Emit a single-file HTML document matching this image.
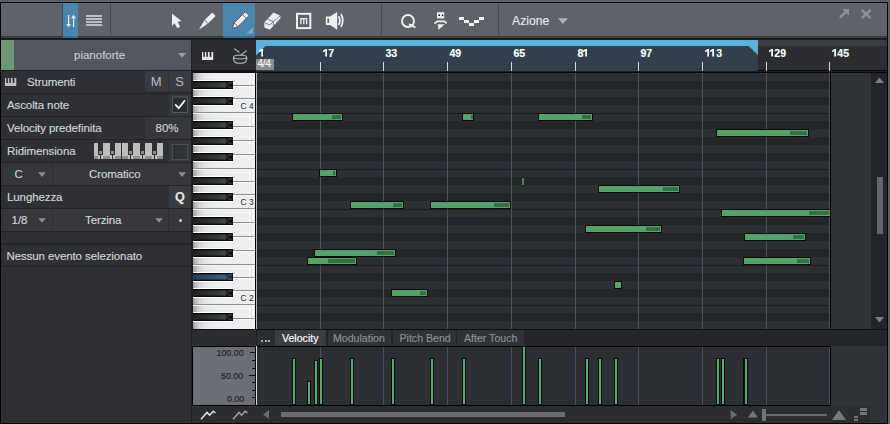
<!DOCTYPE html>
<html><head><meta charset="utf-8"><style>
html,body{margin:0;padding:0;width:890px;height:424px;overflow:hidden;background:#5b5f65}
body>div,body>span,body>svg{position:absolute;display:block}
.t{position:absolute;-webkit-text-stroke:0.15px currentColor;font-family:"Liberation Sans",sans-serif;white-space:nowrap;line-height:1}
</style></head><body>
<div style="left:0px;top:0px;width:890px;height:424px;background:#5b5f65;"></div>
<div style="left:0px;top:2px;width:888px;height:422px;background:#000;"></div>
<div style="left:1px;top:3px;width:886px;height:33px;background:#5e6269;"></div>
<div style="left:1px;top:3px;width:886px;height:1px;background:#63676e;"></div>
<div style="left:1px;top:36px;width:886px;height:2px;background:#3b3d41;"></div>
<div style="left:1px;top:38px;width:886px;height:2px;background:#1a1b1d;"></div>
<div style="left:62px;top:3px;width:1px;height:35px;background:#45484d;"></div>
<div style="left:110px;top:3px;width:1px;height:35px;background:#45484d;"></div>
<div style="left:381px;top:3px;width:1px;height:35px;background:#45484d;"></div>
<div style="left:498px;top:3px;width:1px;height:35px;background:#45484d;"></div>
<div style="left:63px;top:3px;width:15px;height:33px;background:#4a85ad;"></div>
<div style="left:63px;top:36px;width:15px;height:2px;background:#3a6a8c;"></div>
<div style="left:223px;top:3px;width:32px;height:33px;background:#4a85ad;"></div>
<div style="left:223px;top:36px;width:32px;height:2px;background:#3a6a8c;"></div>
<svg style="left:62px;top:10px" width="18" height="20" viewBox="62 10 18 20"><rect x="68" y="15" width="1.2" height="10" fill="#efefef"/><polygon points="66,24 71,24 68.6,27.2" fill="#efefef"/><rect x="73" y="17.5" width="1.2" height="9.5" fill="#efefef"/><polygon points="71,18.2 76,18.2 73.6,14.8" fill="#efefef"/></svg>
<div style="left:86px;top:15px;width:16px;height:2px;background:#bdbfc2;"></div>
<div style="left:86px;top:18px;width:16px;height:2px;background:#bdbfc2;"></div>
<div style="left:86px;top:21px;width:16px;height:2px;background:#bdbfc2;"></div>
<div style="left:86px;top:24px;width:16px;height:2px;background:#bdbfc2;"></div>
<svg style="left:168px;top:10px" width="16" height="22" viewBox="168 10 16 22"><polygon points="172,13.5 172,26 174.6,23.2 177.2,28.2 180.2,26.8 177.6,21.8 181.6,21.3" fill="#efefef"/></svg>
<svg style="left:196px;top:10px" width="22" height="22" viewBox="196 10 22 22"><g transform="translate(199,29.4) rotate(-45)"><polygon points="0,0 10.2,-2.6 10.2,2.2" fill="#efefef"/><rect x="10.9" y="-2.6" width="10.4" height="4.8" fill="#efefef"/></g></svg>
<svg style="left:226px;top:8px" width="30" height="28" viewBox="226 8 30 28"><g transform="translate(232.2,28.6) rotate(-45)"><path d="M0.3,0 L5.2,-2.7 L20.2,-2.7 Q21.2,-2.7 21.2,-1.7 L21.2,1.7 Q21.2,2.7 20.2,2.7 L5.2,2.7 Z" fill="#efefef" stroke="#4b4a4a" stroke-width="0.8"/><line x1="5.4" y1="-2.7" x2="5.4" y2="2.7" stroke="#4b4a4a" stroke-width="0.8"/><line x1="17.2" y1="-2.7" x2="17.2" y2="2.7" stroke="#4b4a4a" stroke-width="0.8"/></g><polygon points="246.3,33.5 253,27 253,33.5" fill="#7ea8c6"/></svg>
<svg style="left:260px;top:8px" width="26" height="26" viewBox="260 8 26 26"><polygon points="264.2,22.6 273.6,12.6 280.4,15.8 280.4,18.2 269.8,29.8 264.4,27.4" fill="#efefef"/><polyline points="264.6,22.8 269.8,25 273.4,21.6 280.2,15.9" fill="none" stroke="#5e6269" stroke-width="0.8"/><line x1="273.4" y1="21.6" x2="273.4" y2="25.6" stroke="#5e6269" stroke-width="0.8"/><line x1="267.5" y1="19.2" x2="273.4" y2="21.6" stroke="#5e6269" stroke-width="0.8"/></svg>
<svg style="left:294px;top:10px" width="20" height="22" viewBox="294 10 20 22"><rect x="297" y="13.8" width="13.3" height="14.3" fill="none" stroke="#efefef" stroke-width="2"/><path d="M300.9,24.2 V18.7 H306.6 V24.2 M303.8,18.7 V24.2" fill="none" stroke="#efefef" stroke-width="1.3"/></svg>
<svg style="left:322px;top:8px" width="26" height="26" viewBox="322 8 26 26"><polygon points="325.8,16.6 330.1,16.6 337.2,12 337.2,29.8 330.1,24.9 325.8,24.9" fill="#efefef"/><rect x="327.4" y="18.4" width="1.6" height="4.6" fill="#5e6269"/><path d="M338.6,16.2 Q341.2,20.6 338.6,25" fill="none" stroke="#efefef" stroke-width="1.7"/><path d="M341,14 Q344.6,20.4 341,26.8" fill="none" stroke="#efefef" stroke-width="1.7"/></svg>
<svg style="left:398px;top:10px" width="22" height="22" viewBox="398 10 22 22"><circle cx="408" cy="21" r="6" fill="none" stroke="#efefef" stroke-width="1.9"/><line x1="409" y1="24" x2="415.5" y2="27.5" stroke="#efefef" stroke-width="1.8"/></svg>
<svg style="left:430px;top:8px" width="20" height="26" viewBox="430 8 20 26"><rect x="437" y="12.2" width="7.2" height="6.2" fill="#efefef"/><circle cx="439.2" cy="15.2" r="0.9" fill="#111"/><circle cx="442.6" cy="15.4" r="0.8" fill="#111"/><polygon points="433.8,22.9 437,20.4 444.8,20.4 447.2,22.9 446,24 444.2,22.2 437.4,22.2 435.2,24.2" fill="#efefef"/><polygon points="437.8,24.2 444.8,24.2 438.6,29.8" fill="#efefef"/></svg>
<div style="left:459px;top:17px;width:5px;height:3px;background:#f2f2f2;"></div>
<div style="left:464px;top:20px;width:5px;height:3px;background:#f2f2f2;"></div>
<div style="left:469px;top:23px;width:5px;height:3px;background:#f2f2f2;"></div>
<div style="left:474px;top:20px;width:5px;height:3px;background:#f2f2f2;"></div>
<div style="left:479px;top:17px;width:5px;height:3px;background:#f2f2f2;"></div>
<span class="t" style="left:512px;top:14.97px;font-size:12.2px;color:#e4e6ea;">Azione</span>
<svg style="left:556px;top:16px" width="14" height="10" viewBox="556 16 14 10"><polygon points="558,18.2 567.8,18.2 562.9,24" fill="#afb1b5"/></svg>
<svg style="left:836px;top:6px" width="40" height="16" viewBox="836 6 40 16"><polygon points="842,9 849,9 849,15.8" fill="#8c8f94"/><line x1="840" y1="17.6" x2="846.2" y2="11.6" stroke="#8c8f94" stroke-width="2.6"/><path d="M861.6,9.8 L870.6,18.2 M870.6,9.8 L861.6,18.2" stroke="#8c8f94" stroke-width="2.4"/></svg>
<div style="left:1px;top:40px;width:13px;height:30px;background:#6f9478;"></div>
<div style="left:14px;top:40px;width:177px;height:30px;background:#54575e;"></div>
<div style="left:191px;top:40px;width:1px;height:30px;background:#1e1f22;"></div>
<div style="left:192px;top:40px;width:64px;height:30px;background:#2b2d31;"></div>
<span class="t" style="left:74px;top:50.07px;font-size:11.5px;color:#c9ced6;">pianoforte</span>
<svg style="left:176px;top:50px" width="12" height="10" viewBox="176 50 12 10"><polygon points="178.2,53 186,53 182.1,57.8" fill="#9c9fa4"/></svg>
<svg style="left:200px;top:50px" width="16" height="12" viewBox="200 50 16 12"><rect x="202" y="52" width="11.2" height="8" fill="#e6e6e6"/><rect x="203.3" y="52" width="1.6" height="4.8" fill="#2b2d31"/><rect x="206.3" y="52" width="1.6" height="4.8" fill="#2b2d31"/><rect x="209.6" y="52" width="1.8" height="4.8" fill="#2b2d31"/></svg>
<svg style="left:230px;top:46px" width="20" height="20" viewBox="230 46 20 20"><ellipse cx="240.1" cy="56.9" rx="6.5" ry="1.9" fill="none" stroke="#a6a8ac" stroke-width="1.25"/><path d="M233.6,56.9 V59.6 Q234,63.3 240.1,63.3 Q246.2,63.3 246.6,59.6 V56.9" fill="none" stroke="#a6a8ac" stroke-width="1.25"/><line x1="234.2" y1="48.4" x2="239.4" y2="52.4" stroke="#a6a8ac" stroke-width="1.3"/><line x1="246.8" y1="50.4" x2="240.4" y2="55.6" stroke="#a6a8ac" stroke-width="1.3"/></svg>
<div style="left:256px;top:40px;width:502px;height:6px;background:#5ab2de;"></div>
<div style="left:758px;top:40px;width:129px;height:6px;background:#3b3d41;"></div>
<div style="left:256px;top:46px;width:502px;height:25px;background:#33404b;"></div>
<div style="left:758px;top:46px;width:129px;height:25px;background:#2b2d31;"></div>
<div style="left:758px;top:70px;width:129px;height:1px;background:#08090a;"></div>
<svg style="left:256px;top:46px" width="10" height="10" viewBox="256 46 10 10"><polygon points="256,46 265.5,46 256,55.5" fill="#5ab2de"/></svg>
<svg style="left:748px;top:46px" width="10" height="10" viewBox="748 46 10 10"><polygon points="748.5,46 758,46 758,55" fill="#5ab2de"/></svg>
<div style="left:320px;top:62px;width:1px;height:9px;background:#d8d8d8;"></div>
<svg style="left:321.50px;top:48.28px" width="7.84" height="9.52" viewBox="321.50 48.28 7.84 9.52"><rect x="324.75" y="49.28" width="1.79" height="7.52" fill="#ffffff"/><polygon points="324.85,49.28 322.44,50.96 322.44,52.54 324.85,51.38" fill="#ffffff"/></svg>
<span class="t" style="left:328.34px;top:47.91px;font-size:10.5px;color:#ffffff;font-weight:bold">7</span>
<div style="left:383px;top:62px;width:1px;height:9px;background:#d8d8d8;"></div>
<span class="t" style="left:385.50px;top:47.91px;font-size:10.5px;color:#ffffff;font-weight:bold">3</span>
<span class="t" style="left:391.34px;top:47.91px;font-size:10.5px;color:#ffffff;font-weight:bold">3</span>
<div style="left:447px;top:62px;width:1px;height:9px;background:#d8d8d8;"></div>
<span class="t" style="left:449.50px;top:47.91px;font-size:10.5px;color:#ffffff;font-weight:bold">4</span>
<span class="t" style="left:455.34px;top:47.91px;font-size:10.5px;color:#ffffff;font-weight:bold">9</span>
<div style="left:511px;top:62px;width:1px;height:9px;background:#d8d8d8;"></div>
<span class="t" style="left:513.50px;top:47.91px;font-size:10.5px;color:#ffffff;font-weight:bold">6</span>
<span class="t" style="left:519.34px;top:47.91px;font-size:10.5px;color:#ffffff;font-weight:bold">5</span>
<div style="left:575px;top:62px;width:1px;height:9px;background:#d8d8d8;"></div>
<span class="t" style="left:577.50px;top:47.91px;font-size:10.5px;color:#ffffff;font-weight:bold">8</span>
<svg style="left:582.34px;top:48.28px" width="7.84" height="9.52" viewBox="582.34 48.28 7.84 9.52"><rect x="585.59" y="49.28" width="1.79" height="7.52" fill="#ffffff"/><polygon points="585.69,49.28 583.28,50.96 583.28,52.54 585.69,51.38" fill="#ffffff"/></svg>
<div style="left:638px;top:62px;width:1px;height:9px;background:#d8d8d8;"></div>
<span class="t" style="left:640.50px;top:47.91px;font-size:10.5px;color:#ffffff;font-weight:bold">9</span>
<span class="t" style="left:646.34px;top:47.91px;font-size:10.5px;color:#ffffff;font-weight:bold">7</span>
<div style="left:702px;top:62px;width:1px;height:9px;background:#d8d8d8;"></div>
<svg style="left:703.50px;top:48.28px" width="7.84" height="9.52" viewBox="703.50 48.28 7.84 9.52"><rect x="706.75" y="49.28" width="1.79" height="7.52" fill="#ffffff"/><polygon points="706.85,49.28 704.44,50.96 704.44,52.54 706.85,51.38" fill="#ffffff"/></svg>
<svg style="left:709.34px;top:48.28px" width="7.84" height="9.52" viewBox="709.34 48.28 7.84 9.52"><rect x="712.59" y="49.28" width="1.79" height="7.52" fill="#ffffff"/><polygon points="712.69,49.28 710.28,50.96 710.28,52.54 712.69,51.38" fill="#ffffff"/></svg>
<span class="t" style="left:716.18px;top:47.91px;font-size:10.5px;color:#ffffff;font-weight:bold">3</span>
<div style="left:766px;top:62px;width:1px;height:9px;background:#d8d8d8;"></div>
<svg style="left:767.50px;top:48.28px" width="7.84" height="9.52" viewBox="767.50 48.28 7.84 9.52"><rect x="770.75" y="49.28" width="1.79" height="7.52" fill="#ffffff"/><polygon points="770.85,49.28 768.44,50.96 768.44,52.54 770.85,51.38" fill="#ffffff"/></svg>
<span class="t" style="left:774.34px;top:47.91px;font-size:10.5px;color:#ffffff;font-weight:bold">2</span>
<span class="t" style="left:780.18px;top:47.91px;font-size:10.5px;color:#ffffff;font-weight:bold">9</span>
<div style="left:829px;top:62px;width:1px;height:9px;background:#d8d8d8;"></div>
<svg style="left:830.50px;top:48.28px" width="7.84" height="9.52" viewBox="830.50 48.28 7.84 9.52"><rect x="833.75" y="49.28" width="1.79" height="7.52" fill="#ffffff"/><polygon points="833.85,49.28 831.44,50.96 831.44,52.54 833.85,51.38" fill="#ffffff"/></svg>
<span class="t" style="left:837.34px;top:47.91px;font-size:10.5px;color:#ffffff;font-weight:bold">4</span>
<span class="t" style="left:843.18px;top:47.91px;font-size:10.5px;color:#ffffff;font-weight:bold">5</span>
<svg style="left:257.50px;top:48.28px" width="7.84" height="9.52" viewBox="257.50 48.28 7.84 9.52"><rect x="260.75" y="49.28" width="1.79" height="7.52" fill="#ffffff"/><polygon points="260.85,49.28 258.44,50.96 258.44,52.54 260.85,51.38" fill="#ffffff"/></svg>
<div style="left:256px;top:59px;width:18px;height:11px;background:#8c8c8c;"></div>
<span class="t" style="left:257.5px;top:59.13px;font-size:10px;color:#f4f4f4;letter-spacing:-0.2px;-webkit-text-stroke:0.15px #f4f4f4">4/4</span>
<div style="left:192px;top:70px;width:64px;height:3px;background:#0e0f10;"></div>
<div style="left:256px;top:71px;width:631px;height:1px;background:#1e2023;"></div>
<div style="left:256px;top:72px;width:631px;height:1px;background:#050505;"></div>
<div style="left:1px;top:70px;width:190px;height:1px;background:#1e1f22;"></div>
<div style="left:1px;top:71px;width:190px;height:352px;background:#2e3034;"></div>
<div style="left:191px;top:71px;width:1px;height:352px;background:#1e1f22;"></div>
<div style="left:1px;top:93px;width:190px;height:1px;background:#232427;"></div>
<div style="left:1px;top:116px;width:190px;height:1px;background:#232427;"></div>
<div style="left:1px;top:139px;width:190px;height:1px;background:#232427;"></div>
<div style="left:1px;top:162px;width:190px;height:1px;background:#232427;"></div>
<div style="left:1px;top:185px;width:190px;height:1px;background:#232427;"></div>
<div style="left:1px;top:208px;width:190px;height:1px;background:#232427;"></div>
<div style="left:1px;top:231px;width:190px;height:1px;background:#232427;"></div>
<div style="left:1px;top:266px;width:190px;height:1px;background:#232427;"></div>
<div style="left:1px;top:243px;width:190px;height:2px;background:#222326;"></div>
<div style="left:145px;top:71px;width:23px;height:20px;background:#393b40;"></div>
<div style="left:169px;top:71px;width:22px;height:20px;background:#393b40;"></div>
<div style="left:169px;top:94px;width:22px;height:22px;background:#35373b;"></div>
<div style="left:145px;top:117px;width:46px;height:22px;background:#35373b;"></div>
<div style="left:169px;top:140px;width:22px;height:22px;background:#35373b;"></div>
<div style="left:1px;top:163px;width:190px;height:22px;background:#35373b;"></div>
<div style="left:52px;top:163px;width:1px;height:22px;background:#2a2c30;"></div>
<div style="left:169px;top:186px;width:22px;height:22px;background:#393b40;"></div>
<div style="left:1px;top:209px;width:190px;height:22px;background:#35373b;"></div>
<div style="left:52px;top:209px;width:1px;height:22px;background:#2a2c30;"></div>
<div style="left:168px;top:209px;width:1px;height:22px;background:#2a2c30;"></div>
<svg style="left:3px;top:76px" width="16" height="12" viewBox="3 76 16 12"><rect x="5" y="78" width="11.3" height="8" fill="#bfc1c4"/><rect x="6.3" y="78" width="1.6" height="5" fill="#2e3034"/><rect x="9.3" y="78" width="1.6" height="5" fill="#2e3034"/><rect x="12.6" y="78" width="1.8" height="5" fill="#2e3034"/></svg>
<span class="t" style="left:27px;top:77.27px;font-size:11.5px;color:#d2d5da;letter-spacing:-0.1px">Strumenti</span>
<span class="t" style="left:7px;top:99.87px;font-size:11.5px;color:#d2d5da;letter-spacing:-0.1px">Ascolta note</span>
<span class="t" style="left:7px;top:123.27px;font-size:11.5px;color:#d2d5da;letter-spacing:-0.1px">Velocity predefinita</span>
<span class="t" style="left:155.5px;top:123.27px;font-size:11.5px;color:#d2d5da;">80%</span>
<span class="t" style="left:7px;top:145.87px;font-size:11.5px;color:#d2d5da;letter-spacing:-0.1px">Ridimensiona</span>
<span class="t" style="left:14.5px;top:169.27px;font-size:11.5px;color:#d2d5da;">C</span>
<span class="t" style="left:89px;top:169.27px;font-size:11.5px;color:#d2d5da;letter-spacing:-0.1px">Cromatico</span>
<span class="t" style="left:7px;top:191.77px;font-size:11.5px;color:#d2d5da;letter-spacing:-0.1px">Lunghezza</span>
<span class="t" style="left:11.5px;top:215.27px;font-size:11.5px;color:#d2d5da;">1/8</span>
<span class="t" style="left:85px;top:215.27px;font-size:11.5px;color:#d2d5da;letter-spacing:-0.1px">Terzina</span>
<span class="t" style="left:6.5px;top:250.87px;font-size:11.5px;color:#d2d5da;letter-spacing:-0.1px">Nessun evento selezionato</span>
<span class="t" style="left:150.8px;top:74.80px;font-size:13px;color:#bcbec2;-webkit-text-stroke:0">M</span>
<span class="t" style="left:175.3px;top:74.80px;font-size:13px;color:#bcbec2;-webkit-text-stroke:0">S</span>
<span class="t" style="left:175px;top:191.13px;font-size:12.6px;color:#e8e8e8;font-weight:bold">Q</span>
<svg style="left:36px;top:170px" width="12" height="9" viewBox="36 170 12 9"><polygon points="38,172.2 46,172.2 42,177" fill="#8a8c90"/></svg>
<svg style="left:176px;top:170px" width="12" height="9" viewBox="176 170 12 9"><polygon points="178.1,172.2 186.1,172.2 182.1,177" fill="#8a8c90"/></svg>
<svg style="left:36px;top:216px" width="12" height="9" viewBox="36 216 12 9"><polygon points="38.3,218.2 46,218.2 42.1,222.8" fill="#8a8c90"/></svg>
<svg style="left:153px;top:216px" width="12" height="9" viewBox="153 216 12 9"><polygon points="155.2,218.2 163,218.2 159.1,222.8" fill="#8a8c90"/></svg>
<div style="left:179px;top:219px;width:3px;height:3px;background:#c8cacd;border-radius:1.5px"></div>
<svg style="left:170px;top:95px" width="20" height="20" viewBox="170 95 20 20"><rect x="172.5" y="97" width="15" height="15.5" fill="#2a2c30" stroke="#55585e" stroke-width="1"/><path d="M175.2,104.4 L178.7,108.2 L185,100.2" fill="none" stroke="#ffffff" stroke-width="1.7"/></svg>
<svg style="left:170px;top:142px" width="20" height="20" viewBox="170 142 20 20"><rect x="172.5" y="144.5" width="15" height="15" fill="#2e3034" stroke="#4a4d52" stroke-width="1"/></svg>
<svg style="left:92px;top:141px" width="74" height="20" viewBox="92 141 74 20"><g shape-rendering="crispEdges"><rect x="94" y="155" width="69" height="4" fill="#bdbdbd"/><rect x="94" y="143" width="4" height="12" fill="#bdbdbd"/><rect x="94" y="156" width="4" height="3" fill="#8d8d8d"/><rect x="103" y="143" width="7" height="12" fill="#bdbdbd"/><rect x="103" y="156" width="7" height="3" fill="#8d8d8d"/><rect x="115" y="143" width="6" height="12" fill="#bdbdbd"/><rect x="115" y="156" width="6" height="3" fill="#8d8d8d"/><rect x="122" y="143" width="6" height="12" fill="#bdbdbd"/><rect x="122" y="156" width="6" height="3" fill="#8d8d8d"/><rect x="133" y="143" width="7" height="12" fill="#bdbdbd"/><rect x="133" y="156" width="7" height="3" fill="#8d8d8d"/><rect x="145" y="143" width="7" height="12" fill="#bdbdbd"/><rect x="145" y="156" width="7" height="3" fill="#8d8d8d"/><rect x="157" y="143" width="6" height="12" fill="#bdbdbd"/><rect x="157" y="156" width="6" height="3" fill="#8d8d8d"/><rect x="99" y="151" width="3" height="3" fill="#8e8e8e"/><rect x="111" y="151" width="3" height="3" fill="#8e8e8e"/><rect x="129" y="151" width="3" height="3" fill="#8e8e8e"/><rect x="141" y="151" width="3" height="3" fill="#8e8e8e"/><rect x="153" y="151" width="3" height="3" fill="#8e8e8e"/><rect x="100" y="155" width="1" height="4" fill="#2e3034"/><rect x="112" y="155" width="1" height="4" fill="#2e3034"/><rect x="121" y="155" width="1" height="4" fill="#2e3034"/><rect x="130" y="155" width="1" height="4" fill="#2e3034"/><rect x="142" y="155" width="1" height="4" fill="#2e3034"/><rect x="154" y="155" width="1" height="4" fill="#2e3034"/></g></svg>
<div style="left:192px;top:73px;width:1px;height:256px;background:#1e1f22;"></div>
<div style="left:193px;top:73px;width:62px;height:256px;background:linear-gradient(to right,#9c9c9c 0px,#cfcfcf 5px,#e4e4e4 11px,#ededed 22px,#efefef 100%)"></div>
<div style="left:233px;top:85px;width:22px;height:1px;background:#8e8e8e;"></div>
<div style="left:193px;top:86px;width:62px;height:1px;background:#f8f8f8;"></div>
<div style="left:233px;top:98px;width:22px;height:1px;background:#8e8e8e;"></div>
<div style="left:193px;top:99px;width:62px;height:1px;background:#f8f8f8;"></div>
<div style="left:193px;top:112px;width:62px;height:1px;background:#8e8e8e;"></div>
<div style="left:193px;top:113px;width:62px;height:1px;background:#f8f8f8;"></div>
<div style="left:233px;top:126px;width:22px;height:1px;background:#8e8e8e;"></div>
<div style="left:193px;top:127px;width:62px;height:1px;background:#f8f8f8;"></div>
<div style="left:233px;top:140px;width:22px;height:1px;background:#8e8e8e;"></div>
<div style="left:193px;top:141px;width:62px;height:1px;background:#f8f8f8;"></div>
<div style="left:233px;top:154px;width:22px;height:1px;background:#8e8e8e;"></div>
<div style="left:193px;top:155px;width:62px;height:1px;background:#f8f8f8;"></div>
<div style="left:193px;top:168px;width:62px;height:1px;background:#8e8e8e;"></div>
<div style="left:193px;top:169px;width:62px;height:1px;background:#f8f8f8;"></div>
<div style="left:233px;top:181px;width:22px;height:1px;background:#8e8e8e;"></div>
<div style="left:193px;top:182px;width:62px;height:1px;background:#f8f8f8;"></div>
<div style="left:233px;top:194px;width:22px;height:1px;background:#8e8e8e;"></div>
<div style="left:193px;top:195px;width:62px;height:1px;background:#f8f8f8;"></div>
<div style="left:193px;top:208px;width:62px;height:1px;background:#8e8e8e;"></div>
<div style="left:193px;top:209px;width:62px;height:1px;background:#f8f8f8;"></div>
<div style="left:233px;top:222px;width:22px;height:1px;background:#8e8e8e;"></div>
<div style="left:193px;top:223px;width:62px;height:1px;background:#f8f8f8;"></div>
<div style="left:233px;top:236px;width:22px;height:1px;background:#8e8e8e;"></div>
<div style="left:193px;top:237px;width:62px;height:1px;background:#f8f8f8;"></div>
<div style="left:233px;top:250px;width:22px;height:1px;background:#8e8e8e;"></div>
<div style="left:193px;top:251px;width:62px;height:1px;background:#f8f8f8;"></div>
<div style="left:193px;top:264px;width:62px;height:1px;background:#8e8e8e;"></div>
<div style="left:193px;top:265px;width:62px;height:1px;background:#f8f8f8;"></div>
<div style="left:233px;top:277px;width:22px;height:1px;background:#8e8e8e;"></div>
<div style="left:193px;top:278px;width:62px;height:1px;background:#f8f8f8;"></div>
<div style="left:233px;top:290px;width:22px;height:1px;background:#8e8e8e;"></div>
<div style="left:193px;top:291px;width:62px;height:1px;background:#f8f8f8;"></div>
<div style="left:193px;top:304px;width:62px;height:1px;background:#8e8e8e;"></div>
<div style="left:193px;top:305px;width:62px;height:1px;background:#f8f8f8;"></div>
<div style="left:233px;top:318px;width:22px;height:1px;background:#8e8e8e;"></div>
<div style="left:193px;top:319px;width:62px;height:1px;background:#f8f8f8;"></div>
<div style="left:193px;top:80px;width:41px;height:1px;background:#fbfbfb"></div>
<div style="left:193px;top:89px;width:41px;height:1px;background:#fbfbfb"></div>
<div style="left:193px;top:81px;width:40px;height:8px;background:#0b0b0c"></div>
<div style="left:193px;top:82px;width:34px;height:6px;background:linear-gradient(to right,#1f2123,#303336 60%,#43464a)"></div>
<div style="left:193px;top:82px;width:34px;height:1px;background:rgba(0,0,0,0.35)"></div>
<div style="left:193px;top:87px;width:34px;height:1px;background:rgba(0,0,0,0.35)"></div>
<svg style="left:226px;top:81px" width="7" height="8" viewBox="226 81 7 8"><rect x="226" y="82" width="6" height="6" fill="#131415"/><path d="M232,82 Q227,83 226.5,85 Q227,87 232,88" fill="none" stroke="#55585c" stroke-width="0.7"/></svg>
<div style="left:193px;top:96px;width:41px;height:1px;background:#fbfbfb"></div>
<div style="left:193px;top:105px;width:41px;height:1px;background:#fbfbfb"></div>
<div style="left:193px;top:97px;width:40px;height:8px;background:#0b0b0c"></div>
<div style="left:193px;top:98px;width:34px;height:6px;background:linear-gradient(to right,#1f2123,#303336 60%,#43464a)"></div>
<div style="left:193px;top:98px;width:34px;height:1px;background:rgba(0,0,0,0.35)"></div>
<div style="left:193px;top:103px;width:34px;height:1px;background:rgba(0,0,0,0.35)"></div>
<svg style="left:226px;top:97px" width="7" height="8" viewBox="226 97 7 8"><rect x="226" y="98" width="6" height="6" fill="#131415"/><path d="M232,98 Q227,99 226.5,101 Q227,103 232,104" fill="none" stroke="#55585c" stroke-width="0.7"/></svg>
<div style="left:193px;top:120px;width:41px;height:1px;background:#fbfbfb"></div>
<div style="left:193px;top:129px;width:41px;height:1px;background:#fbfbfb"></div>
<div style="left:193px;top:121px;width:40px;height:8px;background:#0b0b0c"></div>
<div style="left:193px;top:122px;width:34px;height:6px;background:linear-gradient(to right,#1f2123,#303336 60%,#43464a)"></div>
<div style="left:193px;top:122px;width:34px;height:1px;background:rgba(0,0,0,0.35)"></div>
<div style="left:193px;top:127px;width:34px;height:1px;background:rgba(0,0,0,0.35)"></div>
<svg style="left:226px;top:121px" width="7" height="8" viewBox="226 121 7 8"><rect x="226" y="122" width="6" height="6" fill="#131415"/><path d="M232,122 Q227,123 226.5,125 Q227,127 232,128" fill="none" stroke="#55585c" stroke-width="0.7"/></svg>
<div style="left:193px;top:136px;width:41px;height:1px;background:#fbfbfb"></div>
<div style="left:193px;top:145px;width:41px;height:1px;background:#fbfbfb"></div>
<div style="left:193px;top:137px;width:40px;height:8px;background:#0b0b0c"></div>
<div style="left:193px;top:138px;width:34px;height:6px;background:linear-gradient(to right,#1f2123,#303336 60%,#43464a)"></div>
<div style="left:193px;top:138px;width:34px;height:1px;background:rgba(0,0,0,0.35)"></div>
<div style="left:193px;top:143px;width:34px;height:1px;background:rgba(0,0,0,0.35)"></div>
<svg style="left:226px;top:137px" width="7" height="8" viewBox="226 137 7 8"><rect x="226" y="138" width="6" height="6" fill="#131415"/><path d="M232,138 Q227,139 226.5,141 Q227,143 232,144" fill="none" stroke="#55585c" stroke-width="0.7"/></svg>
<div style="left:193px;top:152px;width:41px;height:1px;background:#fbfbfb"></div>
<div style="left:193px;top:161px;width:41px;height:1px;background:#fbfbfb"></div>
<div style="left:193px;top:153px;width:40px;height:8px;background:#0b0b0c"></div>
<div style="left:193px;top:154px;width:34px;height:6px;background:linear-gradient(to right,#1f2123,#303336 60%,#43464a)"></div>
<div style="left:193px;top:154px;width:34px;height:1px;background:rgba(0,0,0,0.35)"></div>
<div style="left:193px;top:159px;width:34px;height:1px;background:rgba(0,0,0,0.35)"></div>
<svg style="left:226px;top:153px" width="7" height="8" viewBox="226 153 7 8"><rect x="226" y="154" width="6" height="6" fill="#131415"/><path d="M232,154 Q227,155 226.5,157 Q227,159 232,160" fill="none" stroke="#55585c" stroke-width="0.7"/></svg>
<div style="left:193px;top:176px;width:41px;height:1px;background:#fbfbfb"></div>
<div style="left:193px;top:185px;width:41px;height:1px;background:#fbfbfb"></div>
<div style="left:193px;top:177px;width:40px;height:8px;background:#0b0b0c"></div>
<div style="left:193px;top:178px;width:34px;height:6px;background:linear-gradient(to right,#1f2123,#303336 60%,#43464a)"></div>
<div style="left:193px;top:178px;width:34px;height:1px;background:rgba(0,0,0,0.35)"></div>
<div style="left:193px;top:183px;width:34px;height:1px;background:rgba(0,0,0,0.35)"></div>
<svg style="left:226px;top:177px" width="7" height="8" viewBox="226 177 7 8"><rect x="226" y="178" width="6" height="6" fill="#131415"/><path d="M232,178 Q227,179 226.5,181 Q227,183 232,184" fill="none" stroke="#55585c" stroke-width="0.7"/></svg>
<div style="left:193px;top:192px;width:41px;height:1px;background:#fbfbfb"></div>
<div style="left:193px;top:201px;width:41px;height:1px;background:#fbfbfb"></div>
<div style="left:193px;top:193px;width:40px;height:8px;background:#0b0b0c"></div>
<div style="left:193px;top:194px;width:34px;height:6px;background:linear-gradient(to right,#1f2123,#303336 60%,#43464a)"></div>
<div style="left:193px;top:194px;width:34px;height:1px;background:rgba(0,0,0,0.35)"></div>
<div style="left:193px;top:199px;width:34px;height:1px;background:rgba(0,0,0,0.35)"></div>
<svg style="left:226px;top:193px" width="7" height="8" viewBox="226 193 7 8"><rect x="226" y="194" width="6" height="6" fill="#131415"/><path d="M232,194 Q227,195 226.5,197 Q227,199 232,200" fill="none" stroke="#55585c" stroke-width="0.7"/></svg>
<div style="left:193px;top:216px;width:41px;height:1px;background:#fbfbfb"></div>
<div style="left:193px;top:225px;width:41px;height:1px;background:#fbfbfb"></div>
<div style="left:193px;top:217px;width:40px;height:8px;background:#0b0b0c"></div>
<div style="left:193px;top:218px;width:34px;height:6px;background:linear-gradient(to right,#1f2123,#303336 60%,#43464a)"></div>
<div style="left:193px;top:218px;width:34px;height:1px;background:rgba(0,0,0,0.35)"></div>
<div style="left:193px;top:223px;width:34px;height:1px;background:rgba(0,0,0,0.35)"></div>
<svg style="left:226px;top:217px" width="7" height="8" viewBox="226 217 7 8"><rect x="226" y="218" width="6" height="6" fill="#131415"/><path d="M232,218 Q227,219 226.5,221 Q227,223 232,224" fill="none" stroke="#55585c" stroke-width="0.7"/></svg>
<div style="left:193px;top:232px;width:41px;height:1px;background:#fbfbfb"></div>
<div style="left:193px;top:241px;width:41px;height:1px;background:#fbfbfb"></div>
<div style="left:193px;top:233px;width:40px;height:8px;background:#0b0b0c"></div>
<div style="left:193px;top:234px;width:34px;height:6px;background:linear-gradient(to right,#1f2123,#303336 60%,#43464a)"></div>
<div style="left:193px;top:234px;width:34px;height:1px;background:rgba(0,0,0,0.35)"></div>
<div style="left:193px;top:239px;width:34px;height:1px;background:rgba(0,0,0,0.35)"></div>
<svg style="left:226px;top:233px" width="7" height="8" viewBox="226 233 7 8"><rect x="226" y="234" width="6" height="6" fill="#131415"/><path d="M232,234 Q227,235 226.5,237 Q227,239 232,240" fill="none" stroke="#55585c" stroke-width="0.7"/></svg>
<div style="left:193px;top:248px;width:41px;height:1px;background:#fbfbfb"></div>
<div style="left:193px;top:257px;width:41px;height:1px;background:#fbfbfb"></div>
<div style="left:193px;top:249px;width:40px;height:8px;background:#0b0b0c"></div>
<div style="left:193px;top:250px;width:34px;height:6px;background:linear-gradient(to right,#1f2123,#303336 60%,#43464a)"></div>
<div style="left:193px;top:250px;width:34px;height:1px;background:rgba(0,0,0,0.35)"></div>
<div style="left:193px;top:255px;width:34px;height:1px;background:rgba(0,0,0,0.35)"></div>
<svg style="left:226px;top:249px" width="7" height="8" viewBox="226 249 7 8"><rect x="226" y="250" width="6" height="6" fill="#131415"/><path d="M232,250 Q227,251 226.5,253 Q227,255 232,256" fill="none" stroke="#55585c" stroke-width="0.7"/></svg>
<div style="left:193px;top:272px;width:41px;height:1px;background:#fbfbfb"></div>
<div style="left:193px;top:281px;width:41px;height:1px;background:#fbfbfb"></div>
<div style="left:193px;top:273px;width:40px;height:8px;background:#0b0b0c"></div>
<div style="left:193px;top:274px;width:34px;height:6px;background:linear-gradient(to right,#274059,#36556f 70%,#3f6280)"></div>
<div style="left:193px;top:274px;width:34px;height:1px;background:rgba(0,0,0,0.35)"></div>
<div style="left:193px;top:279px;width:34px;height:1px;background:rgba(0,0,0,0.35)"></div>
<svg style="left:226px;top:273px" width="7" height="8" viewBox="226 273 7 8"><rect x="226" y="274" width="6" height="6" fill="#1f3347"/><path d="M232,274 Q227,275 226.5,277 Q227,279 232,280" fill="none" stroke="#4e7090" stroke-width="0.7"/></svg>
<div style="left:193px;top:288px;width:41px;height:1px;background:#fbfbfb"></div>
<div style="left:193px;top:297px;width:41px;height:1px;background:#fbfbfb"></div>
<div style="left:193px;top:289px;width:40px;height:8px;background:#0b0b0c"></div>
<div style="left:193px;top:290px;width:34px;height:6px;background:linear-gradient(to right,#1f2123,#303336 60%,#43464a)"></div>
<div style="left:193px;top:290px;width:34px;height:1px;background:rgba(0,0,0,0.35)"></div>
<div style="left:193px;top:295px;width:34px;height:1px;background:rgba(0,0,0,0.35)"></div>
<svg style="left:226px;top:289px" width="7" height="8" viewBox="226 289 7 8"><rect x="226" y="290" width="6" height="6" fill="#131415"/><path d="M232,290 Q227,291 226.5,293 Q227,295 232,296" fill="none" stroke="#55585c" stroke-width="0.7"/></svg>
<div style="left:193px;top:312px;width:41px;height:1px;background:#fbfbfb"></div>
<div style="left:193px;top:321px;width:41px;height:1px;background:#fbfbfb"></div>
<div style="left:193px;top:313px;width:40px;height:8px;background:#0b0b0c"></div>
<div style="left:193px;top:314px;width:34px;height:6px;background:linear-gradient(to right,#1f2123,#303336 60%,#43464a)"></div>
<div style="left:193px;top:314px;width:34px;height:1px;background:rgba(0,0,0,0.35)"></div>
<div style="left:193px;top:319px;width:34px;height:1px;background:rgba(0,0,0,0.35)"></div>
<svg style="left:226px;top:313px" width="7" height="8" viewBox="226 313 7 8"><rect x="226" y="314" width="6" height="6" fill="#131415"/><path d="M232,314 Q227,315 226.5,317 Q227,319 232,320" fill="none" stroke="#55585c" stroke-width="0.7"/></svg>
<span class="t" style="left:240.5px;top:101.89px;font-size:8.4px;color:#0f1d3d;-webkit-text-stroke:0">C 4</span>
<span class="t" style="left:240.5px;top:197.89px;font-size:8.4px;color:#0f1d3d;-webkit-text-stroke:0">C 3</span>
<span class="t" style="left:240.5px;top:293.89px;font-size:8.4px;color:#0f1d3d;-webkit-text-stroke:0">C 2</span>
<div style="left:255px;top:73px;width:1px;height:256px;background:#000;"></div>
<div style="left:256px;top:73px;width:1px;height:256px;background:#b4b4b4;"></div>
<div style="left:257px;top:73px;width:573px;height:256px;background:#2c2f34;"></div>
<div style="left:257px;top:81px;width:573px;height:8px;background:#232528;"></div>
<div style="left:257px;top:97px;width:573px;height:8px;background:#232528;"></div>
<div style="left:257px;top:121px;width:573px;height:8px;background:#232528;"></div>
<div style="left:257px;top:137px;width:573px;height:8px;background:#232528;"></div>
<div style="left:257px;top:153px;width:573px;height:8px;background:#232528;"></div>
<div style="left:257px;top:177px;width:573px;height:8px;background:#232528;"></div>
<div style="left:257px;top:193px;width:573px;height:8px;background:#232528;"></div>
<div style="left:257px;top:217px;width:573px;height:8px;background:#232528;"></div>
<div style="left:257px;top:233px;width:573px;height:8px;background:#232528;"></div>
<div style="left:257px;top:249px;width:573px;height:8px;background:#232528;"></div>
<div style="left:257px;top:273px;width:573px;height:8px;background:#232528;"></div>
<div style="left:257px;top:289px;width:573px;height:8px;background:#232528;"></div>
<div style="left:257px;top:313px;width:573px;height:8px;background:#232528;"></div>
<div style="left:257px;top:113px;width:573px;height:1px;background:#1b1c1f;"></div>
<div style="left:257px;top:169px;width:573px;height:1px;background:#1b1c1f;"></div>
<div style="left:257px;top:209px;width:573px;height:1px;background:#1b1c1f;"></div>
<div style="left:257px;top:265px;width:573px;height:1px;background:#1b1c1f;"></div>
<div style="left:257px;top:305px;width:573px;height:1px;background:#1b1c1f;"></div>
<div style="left:320px;top:73px;width:1px;height:256px;background:#4a5360;"></div>
<div style="left:383px;top:73px;width:1px;height:256px;background:#4a5360;"></div>
<div style="left:447px;top:73px;width:1px;height:256px;background:#4a5360;"></div>
<div style="left:511px;top:73px;width:1px;height:256px;background:#4a5360;"></div>
<div style="left:575px;top:73px;width:1px;height:256px;background:#4a5360;"></div>
<div style="left:638px;top:73px;width:1px;height:256px;background:#4a5360;"></div>
<div style="left:702px;top:73px;width:1px;height:256px;background:#4a5360;"></div>
<div style="left:766px;top:73px;width:1px;height:256px;background:#4a5360;"></div>
<div style="left:829px;top:73px;width:1px;height:256px;background:#4a5360;"></div>
<div style="left:830px;top:70px;width:1px;height:260px;background:#000;"></div>
<div style="left:257px;top:329px;width:574px;height:1px;background:#000;"></div>
<div style="left:831px;top:73px;width:40px;height:256px;background:#303338;"></div>
<div style="left:871px;top:73px;width:16px;height:256px;background:#222427;"></div>
<svg style="left:873px;top:76px" width="14" height="9" viewBox="873 76 14 9"><polygon points="875,83 884,83 879.5,77.6" fill="#7c7f84"/></svg>
<svg style="left:873px;top:315px" width="14" height="9" viewBox="873 315 14 9"><polygon points="875,317 884,317 879.5,322.6" fill="#7c7f84"/></svg>
<div style="left:877px;top:177px;width:6px;height:57px;background:#62656c;"></div>
<div style="left:292px;top:113px;width:51px;height:8px;background:#0a0a0a;"></div>
<div style="left:293px;top:114px;width:49px;height:6px;background:#54a46a;"></div>
<div style="left:332px;top:115px;width:9px;height:4px;background:#386f4a;"></div>
<div style="left:462px;top:113px;width:12px;height:8px;background:#0a0a0a;"></div>
<div style="left:463px;top:114px;width:10px;height:6px;background:#54a46a;"></div>
<div style="left:471px;top:115px;width:2px;height:4px;background:#386f4a;"></div>
<div style="left:538px;top:113px;width:55px;height:8px;background:#0a0a0a;"></div>
<div style="left:539px;top:114px;width:53px;height:6px;background:#54a46a;"></div>
<div style="left:582px;top:115px;width:9px;height:4px;background:#386f4a;"></div>
<div style="left:716px;top:129px;width:93px;height:8px;background:#0a0a0a;"></div>
<div style="left:717px;top:130px;width:91px;height:6px;background:#54a46a;"></div>
<div style="left:790px;top:131px;width:17px;height:4px;background:#386f4a;"></div>
<div style="left:319px;top:169px;width:18px;height:8px;background:#0a0a0a;"></div>
<div style="left:320px;top:170px;width:16px;height:6px;background:#54a46a;"></div>
<div style="left:333px;top:171px;width:2px;height:4px;background:#386f4a;"></div>
<div style="left:598px;top:185px;width:82px;height:8px;background:#0a0a0a;"></div>
<div style="left:599px;top:186px;width:80px;height:6px;background:#54a46a;"></div>
<div style="left:663px;top:187px;width:15px;height:4px;background:#386f4a;"></div>
<div style="left:350px;top:201px;width:54px;height:8px;background:#0a0a0a;"></div>
<div style="left:351px;top:202px;width:52px;height:6px;background:#54a46a;"></div>
<div style="left:393px;top:203px;width:9px;height:4px;background:#386f4a;"></div>
<div style="left:430px;top:201px;width:81px;height:8px;background:#0a0a0a;"></div>
<div style="left:431px;top:202px;width:79px;height:6px;background:#54a46a;"></div>
<div style="left:494px;top:203px;width:15px;height:4px;background:#386f4a;"></div>
<div style="left:721px;top:209px;width:110px;height:8px;background:#0a0a0a;"></div>
<div style="left:722px;top:210px;width:108px;height:6px;background:#54a46a;"></div>
<div style="left:809px;top:211px;width:20px;height:4px;background:#386f4a;"></div>
<div style="left:585px;top:225px;width:77px;height:8px;background:#0a0a0a;"></div>
<div style="left:586px;top:226px;width:75px;height:6px;background:#54a46a;"></div>
<div style="left:646px;top:227px;width:14px;height:4px;background:#386f4a;"></div>
<div style="left:744px;top:233px;width:62px;height:8px;background:#0a0a0a;"></div>
<div style="left:745px;top:234px;width:60px;height:6px;background:#54a46a;"></div>
<div style="left:793px;top:235px;width:11px;height:4px;background:#386f4a;"></div>
<div style="left:314px;top:249px;width:82px;height:8px;background:#0a0a0a;"></div>
<div style="left:315px;top:250px;width:80px;height:6px;background:#54a46a;"></div>
<div style="left:377px;top:251px;width:17px;height:4px;background:#386f4a;"></div>
<div style="left:307px;top:257px;width:50px;height:8px;background:#0a0a0a;"></div>
<div style="left:308px;top:258px;width:48px;height:6px;background:#54a46a;"></div>
<div style="left:328px;top:259px;width:27px;height:4px;background:#386f4a;"></div>
<div style="left:743px;top:257px;width:68px;height:8px;background:#0a0a0a;"></div>
<div style="left:744px;top:258px;width:66px;height:6px;background:#54a46a;"></div>
<div style="left:797px;top:259px;width:12px;height:4px;background:#386f4a;"></div>
<div style="left:614px;top:281px;width:8px;height:8px;background:#0a0a0a;"></div>
<div style="left:615px;top:282px;width:6px;height:6px;background:#54a46a;"></div>
<div style="left:391px;top:289px;width:37px;height:8px;background:#0a0a0a;"></div>
<div style="left:392px;top:290px;width:35px;height:6px;background:#54a46a;"></div>
<div style="left:420px;top:291px;width:6px;height:4px;background:#386f4a;"></div>
<div style="left:522px;top:177px;width:1px;height:1px;background:#0a0a0a;"></div>
<div style="left:522px;top:185px;width:1px;height:1px;background:#0a0a0a;"></div>
<div style="left:522px;top:178px;width:2px;height:7px;background:#3f8a4f;"></div>
<div style="left:192px;top:329px;width:695px;height:1px;background:#0e0f10;"></div>
<div style="left:192px;top:330px;width:695px;height:16px;background:#232528;"></div>
<div style="left:192px;top:330px;width:64px;height:16px;background:#2b2d31;"></div>
<div style="left:256px;top:330px;width:1px;height:16px;background:#1e1f22;"></div>
<div style="left:257px;top:330px;width:18px;height:16px;background:#2b2d31;"></div>
<div style="left:275px;top:330px;width:51px;height:16px;background:#3a3d42;"></div>
<div style="left:328px;top:330px;width:63px;height:16px;background:#303236;"></div>
<div style="left:393px;top:330px;width:63px;height:16px;background:#303236;"></div>
<div style="left:457px;top:330px;width:67px;height:16px;background:#303236;"></div>
<div style="left:261px;top:340px;width:2px;height:2px;background:#a9acb0;"></div>
<div style="left:264.5px;top:340px;width:2px;height:2px;background:#a9acb0;"></div>
<div style="left:268px;top:340px;width:2px;height:2px;background:#a9acb0;"></div>
<span class="t" style="left:282px;top:333.23px;font-size:10.6px;color:#ffffff;">Velocity</span>
<span class="t" style="left:333px;top:333.23px;font-size:10.6px;color:#8e9196;">Modulation</span>
<span class="t" style="left:399.5px;top:333.23px;font-size:10.6px;color:#8e9196;">Pitch Bend</span>
<span class="t" style="left:464px;top:333.23px;font-size:10.6px;color:#8e9196;">After Touch</span>
<div style="left:192px;top:346px;width:639px;height:1px;background:#000;"></div>
<div style="left:193px;top:347px;width:62px;height:58px;background:#6b6f76;"></div>
<div style="left:192px;top:346px;width:1px;height:60px;background:#000;"></div>
<div style="left:255px;top:347px;width:1px;height:58px;background:#000;"></div>
<div style="left:256px;top:346px;width:1px;height:59px;background:#d8d8d8;"></div>
<span class="t" style="left:216.5px;top:349.01px;font-size:8.85px;color:#241f2b;">100.00</span>
<span class="t" style="left:221px;top:372.01px;font-size:8.85px;color:#241f2b;">50.00</span>
<span class="t" style="left:227px;top:394.51px;font-size:8.85px;color:#241f2b;">0.00</span>
<div style="left:250px;top:352px;width:5px;height:1px;background:#111;"></div>
<div style="left:252px;top:360px;width:3px;height:1px;background:#111;"></div>
<div style="left:252px;top:368px;width:3px;height:1px;background:#111;"></div>
<div style="left:249px;top:375px;width:6px;height:1px;background:#111;"></div>
<div style="left:252px;top:382px;width:3px;height:1px;background:#111;"></div>
<div style="left:252px;top:390px;width:3px;height:1px;background:#111;"></div>
<div style="left:252px;top:397px;width:3px;height:1px;background:#111;"></div>
<div style="left:257px;top:347px;width:573px;height:58px;background:#2b2e32;"></div>
<div style="left:320px;top:347px;width:1px;height:58px;background:#465060;"></div>
<div style="left:383px;top:347px;width:1px;height:58px;background:#465060;"></div>
<div style="left:447px;top:347px;width:1px;height:58px;background:#465060;"></div>
<div style="left:511px;top:347px;width:1px;height:58px;background:#465060;"></div>
<div style="left:575px;top:347px;width:1px;height:58px;background:#465060;"></div>
<div style="left:638px;top:347px;width:1px;height:58px;background:#465060;"></div>
<div style="left:702px;top:347px;width:1px;height:58px;background:#465060;"></div>
<div style="left:766px;top:347px;width:1px;height:58px;background:#465060;"></div>
<div style="left:829px;top:347px;width:1px;height:58px;background:#465060;"></div>
<div style="left:830px;top:346px;width:1px;height:60px;background:#000;"></div>
<div style="left:831px;top:346px;width:56px;height:60px;background:#303338;"></div>
<div style="left:292px;top:358px;width:4px;height:47px;background:#0a0a0a;"></div>
<div style="left:293px;top:359px;width:2px;height:45px;background:#56ad6c;"></div>
<div style="left:307px;top:381px;width:4px;height:24px;background:#0a0a0a;"></div>
<div style="left:308px;top:382px;width:2px;height:22px;background:#56ad6c;"></div>
<div style="left:314px;top:360px;width:4px;height:45px;background:#0a0a0a;"></div>
<div style="left:315px;top:361px;width:2px;height:43px;background:#56ad6c;"></div>
<div style="left:319px;top:358px;width:4px;height:47px;background:#0a0a0a;"></div>
<div style="left:320px;top:359px;width:2px;height:45px;background:#56ad6c;"></div>
<div style="left:350px;top:358px;width:4px;height:47px;background:#0a0a0a;"></div>
<div style="left:351px;top:359px;width:2px;height:45px;background:#56ad6c;"></div>
<div style="left:391px;top:358px;width:4px;height:47px;background:#0a0a0a;"></div>
<div style="left:392px;top:359px;width:2px;height:45px;background:#56ad6c;"></div>
<div style="left:430px;top:358px;width:4px;height:47px;background:#0a0a0a;"></div>
<div style="left:431px;top:359px;width:2px;height:45px;background:#56ad6c;"></div>
<div style="left:462px;top:358px;width:4px;height:47px;background:#0a0a0a;"></div>
<div style="left:463px;top:359px;width:2px;height:45px;background:#56ad6c;"></div>
<div style="left:522px;top:346px;width:4px;height:59px;background:#0a0a0a;"></div>
<div style="left:523px;top:347px;width:2px;height:57px;background:#56ad6c;"></div>
<div style="left:538px;top:358px;width:4px;height:47px;background:#0a0a0a;"></div>
<div style="left:539px;top:359px;width:2px;height:45px;background:#56ad6c;"></div>
<div style="left:585px;top:358px;width:4px;height:47px;background:#0a0a0a;"></div>
<div style="left:586px;top:359px;width:2px;height:45px;background:#56ad6c;"></div>
<div style="left:598px;top:358px;width:4px;height:47px;background:#0a0a0a;"></div>
<div style="left:599px;top:359px;width:2px;height:45px;background:#56ad6c;"></div>
<div style="left:614px;top:358px;width:4px;height:47px;background:#0a0a0a;"></div>
<div style="left:615px;top:359px;width:2px;height:45px;background:#56ad6c;"></div>
<div style="left:716px;top:358px;width:4px;height:47px;background:#0a0a0a;"></div>
<div style="left:717px;top:359px;width:2px;height:45px;background:#56ad6c;"></div>
<div style="left:721px;top:358px;width:4px;height:47px;background:#0a0a0a;"></div>
<div style="left:722px;top:359px;width:2px;height:45px;background:#56ad6c;"></div>
<div style="left:743px;top:358px;width:4px;height:47px;background:#0a0a0a;"></div>
<div style="left:744px;top:359px;width:2px;height:45px;background:#56ad6c;"></div>
<div style="left:744px;top:358px;width:4px;height:47px;background:#0a0a0a;"></div>
<div style="left:745px;top:359px;width:2px;height:45px;background:#56ad6c;"></div>
<div style="left:192px;top:405px;width:639px;height:1px;background:#000;"></div>
<div style="left:192px;top:406px;width:64px;height:17px;background:#2b2d31;"></div>
<div style="left:256px;top:406px;width:614px;height:17px;background:#2b2d31;"></div>
<div style="left:870px;top:406px;width:17px;height:17px;background:#303338;"></div>
<svg style="left:198px;top:408px" width="20" height="14" viewBox="198 408 20 14"><polyline points="201,419.2 207,412.4 209.6,415.2 213.2,411.2 215.4,413" fill="none" stroke="#e8e8e8" stroke-width="1.5"/></svg>
<svg style="left:230px;top:408px" width="20" height="14" viewBox="230 408 20 14"><polyline points="233,419.2 239,412.4 241.6,415.2 245.2,411.2 247.4,413" fill="none" stroke="#a0a2a6" stroke-width="1.5"/></svg>
<svg style="left:260px;top:408px" width="12" height="14" viewBox="260 408 12 14"><polygon points="269,410 269,419 263,414.5" fill="#696c71"/></svg>
<div style="left:281px;top:412px;width:284px;height:5px;background:#6a6d74;"></div>
<svg style="left:728px;top:408px" width="12" height="14" viewBox="728 408 12 14"><polygon points="730.6,410.2 730.6,419.2 737.2,414.7" fill="#696c71"/></svg>
<svg style="left:745px;top:408px" width="16" height="12" viewBox="745 408 16 12"><polygon points="747.8,417.6 758,417.6 752.9,410.8" fill="#75787d"/></svg>
<div style="left:766px;top:414px;width:61px;height:2px;background:#66696e;"></div>
<div style="left:762px;top:409px;width:4px;height:12px;background:#707378;"></div>
<svg style="left:829px;top:406px" width="20" height="16" viewBox="829 406 20 16"><polygon points="832,420 846,420 839,410.2" fill="#76797e"/></svg>
<div style="left:860px;top:408px;width:7px;height:3px;background:#72757a;"></div>
<div style="left:860px;top:412px;width:7px;height:3px;background:#72757a;"></div>
<div style="left:854px;top:416px;width:4px;height:2px;background:#72757a;"></div>
<div style="left:854px;top:419px;width:4px;height:2px;background:#72757a;"></div>
</body></html>
